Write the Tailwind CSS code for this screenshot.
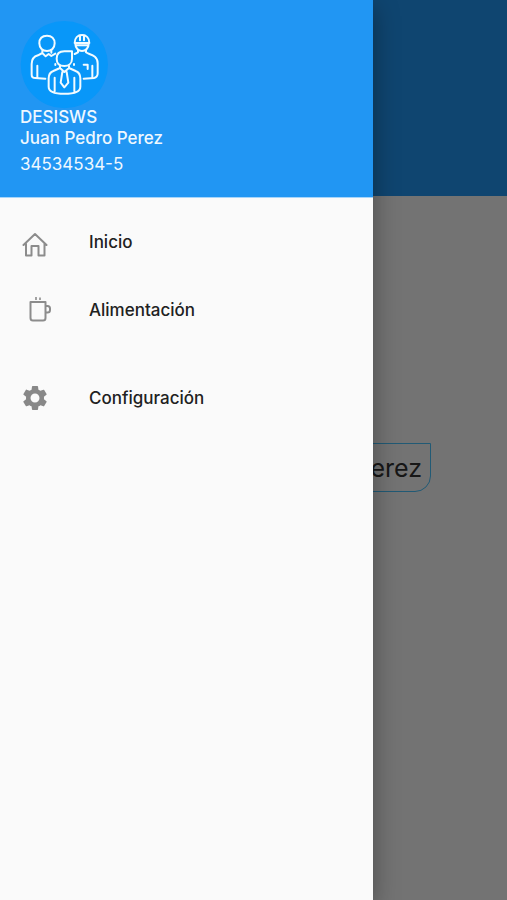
<!DOCTYPE html>
<html lang="es">
<head>
<meta charset="utf-8">
<meta name="viewport" content="width=device-width, initial-scale=1">
<title>DESISWS</title>
<script src="https://cdn.jsdelivr.net/npm/@tailwindcss/browser@4"></script>
</head>
<body class="relative min-h-screen overflow-hidden bg-[#fafafa] font-['Inter','Liberation_Sans',sans-serif] text-[#212121]">
  <main class="min-h-screen">
    <header class="h-49 bg-[#2196f3]"></header>
    <section class="flex justify-end px-19 pt-[247px]">
      <p class="rounded-br-2xl border border-[#48c4ff] pt-2 pr-2 pb-[7px] pl-5 text-[25px] leading-8 whitespace-nowrap text-[#333333]">Juan Pedro Perez</p>
    </section>
  </main>

  <!-- Scrim -->
  <div class="absolute inset-0 bg-black/54"></div>

  <!-- Navigation drawer -->
  <aside class="absolute inset-y-0 left-0 w-[73.5%] bg-[#fafafa] shadow-[0_8px_24px_rgba(0,0,0,0.35)]">
    <div class="border-b border-[#a6d5fa] bg-[#2196f3] px-5 pt-[21px] pb-[22px] text-[17px] font-medium text-[#eff8ff]">
      <svg class="size-[88px]" viewBox="30 33 264 264" fill="none" stroke="#f2fbff" stroke-width="6" stroke-linecap="round" stroke-linejoin="round" aria-hidden="true">
        <circle cx="163" cy="164" r="131" fill="#0897f9" stroke="none"/>
        <path d="M88 100C88 84 98 77 111 77C125 77 134 86 134 100C134 114 124 123 111 123C98 123 88 114 88 100Z"/>
        <path d="M97 122V129L84 136C70 140 65 150 65 162V194Q65 204 76 204L106 206M82 167V202M97 129L107 139L116 132L124 138L136 131M124 121V128M136 162V165"/>
        <path d="M194 99C194 84 203 75 216 75C229 75 238 84 238 99ZM210 76V91M222 76V91M196 101C196 114 205 123 216 123C227 123 236 114 236 101M198 106H234"/>
        <path d="M204 120V127L194 132M228 120V127C236 134 263 134 263 160V190Q263 202 252 204L221 206M247 167V202M221 164H233V177M192 162V165"/>
        <path d="M140 146C140 132 149 124 163 124H186V146C186 160 176 168 163 168C149 168 140 160 140 146Z"/>
        <path d="M150 168V174L130 183C120 187 116 194 116 205V230C116 247 143 251 163 251C184 251 211 247 211 230V205C211 194 207 187 197 183L177 174V168M134 203V244M193 203V244M150 174L163 186L177 174M157 186L152 218L163 232L175 218L170 186"/>
      </svg>
      <p class="-mt-0.5 leading-[21px]">DESISWS</p>
      <p class="leading-[21px]">Juan Pedro Perez</p>
      <p class="mt-1 leading-[22px] font-normal">34534534-5</p>
    </div>

    <nav class="flex flex-col pt-4 text-[17px] leading-6 font-medium" aria-label="Menú principal">
      <a href="#inicio" class="flex h-14 items-center px-5">
        <svg class="mt-2 mr-[39px] size-[30px] shrink-0" viewBox="0 0 30 30" fill="none" stroke="#8c8c8c" stroke-width="2" stroke-linejoin="round" stroke-linecap="round" aria-hidden="true">
          <path d="M3.500 14L15 3L26.500 14M6 12.500V24.500H11.500V15H18.500V24.500H24.500V12.500"/>
        </svg>
        Inicio
      </a>
      <a href="#alimentacion" class="mt-3 flex h-14 items-center px-5">
        <svg class="mr-[39px] size-[30px] shrink-0 overflow-visible" viewBox="0 0 30 30" fill="none" stroke="#8c8c8c" stroke-width="2" stroke-linejoin="round" aria-hidden="true">
          <path d="M10.500 7H25.500V23Q25.500 25.500 23 25.500H13Q10.500 25.500 10.500 23V7ZM25.500 11H27.500Q30 11 30 13.500V15Q30 17.500 27.500 17.500H25.500"/>
          <path stroke-width="1.600" d="M16 2V5M20 2.500V5"/>
        </svg>
        Alimentación
      </a>
      <a href="#configuracion" class="mt-8 flex h-14 items-center px-5">
        <svg class="mr-[39px] size-[30px] shrink-0" viewBox="0 0 24 24" fill="#888888" aria-hidden="true">
          <path d="M19.140 12.940c.04-.3.06-.61.06-.94 0-.32-.02-.64-.07-.94l2.030-1.580c.18-.14.23-.41.12-.61l-1.920-3.320c-.12-.22-.37-.29-.59-.22l-2.390.96c-.5-.38-1.030-.7-1.620-.94l-.36-2.540c-.04-.24-.24-.41-.48-.41h-3.840c-.24 0-.43.17-.47.41l-.36 2.540c-.59.24-1.130.57-1.620.94l-2.390-.96c-.22-.08-.47 0-.59.22L2.740 8.870c-.12.21-.08.47.12.61l2.030 1.580c-.05.3-.09.63-.09.94s.02.64.07.94l-2.030 1.580c-.18.14-.23.41-.12.61l1.920 3.320c.12.22.37.29.59.22l2.390-.96c.5.38 1.030.7 1.620.94l.36 2.540c.05.24.24.41.48.41h3.840c.24 0 .44-.17.47-.41l.36-2.540c.59-.24 1.130-.56 1.620-.94l2.390.96c.22.08.47 0 .59-.22l1.920-3.320c.12-.22.07-.47-.12-.61l-2.010-1.580zM12 15.600c-1.980 0-3.600-1.620-3.600-3.600s1.620-3.600 3.600-3.600 3.600 1.620 3.600 3.600-1.620 3.600-3.600 3.600z"/>
        </svg>
        Configuración
      </a>
    </nav>
  </aside>
</body>
</html>
